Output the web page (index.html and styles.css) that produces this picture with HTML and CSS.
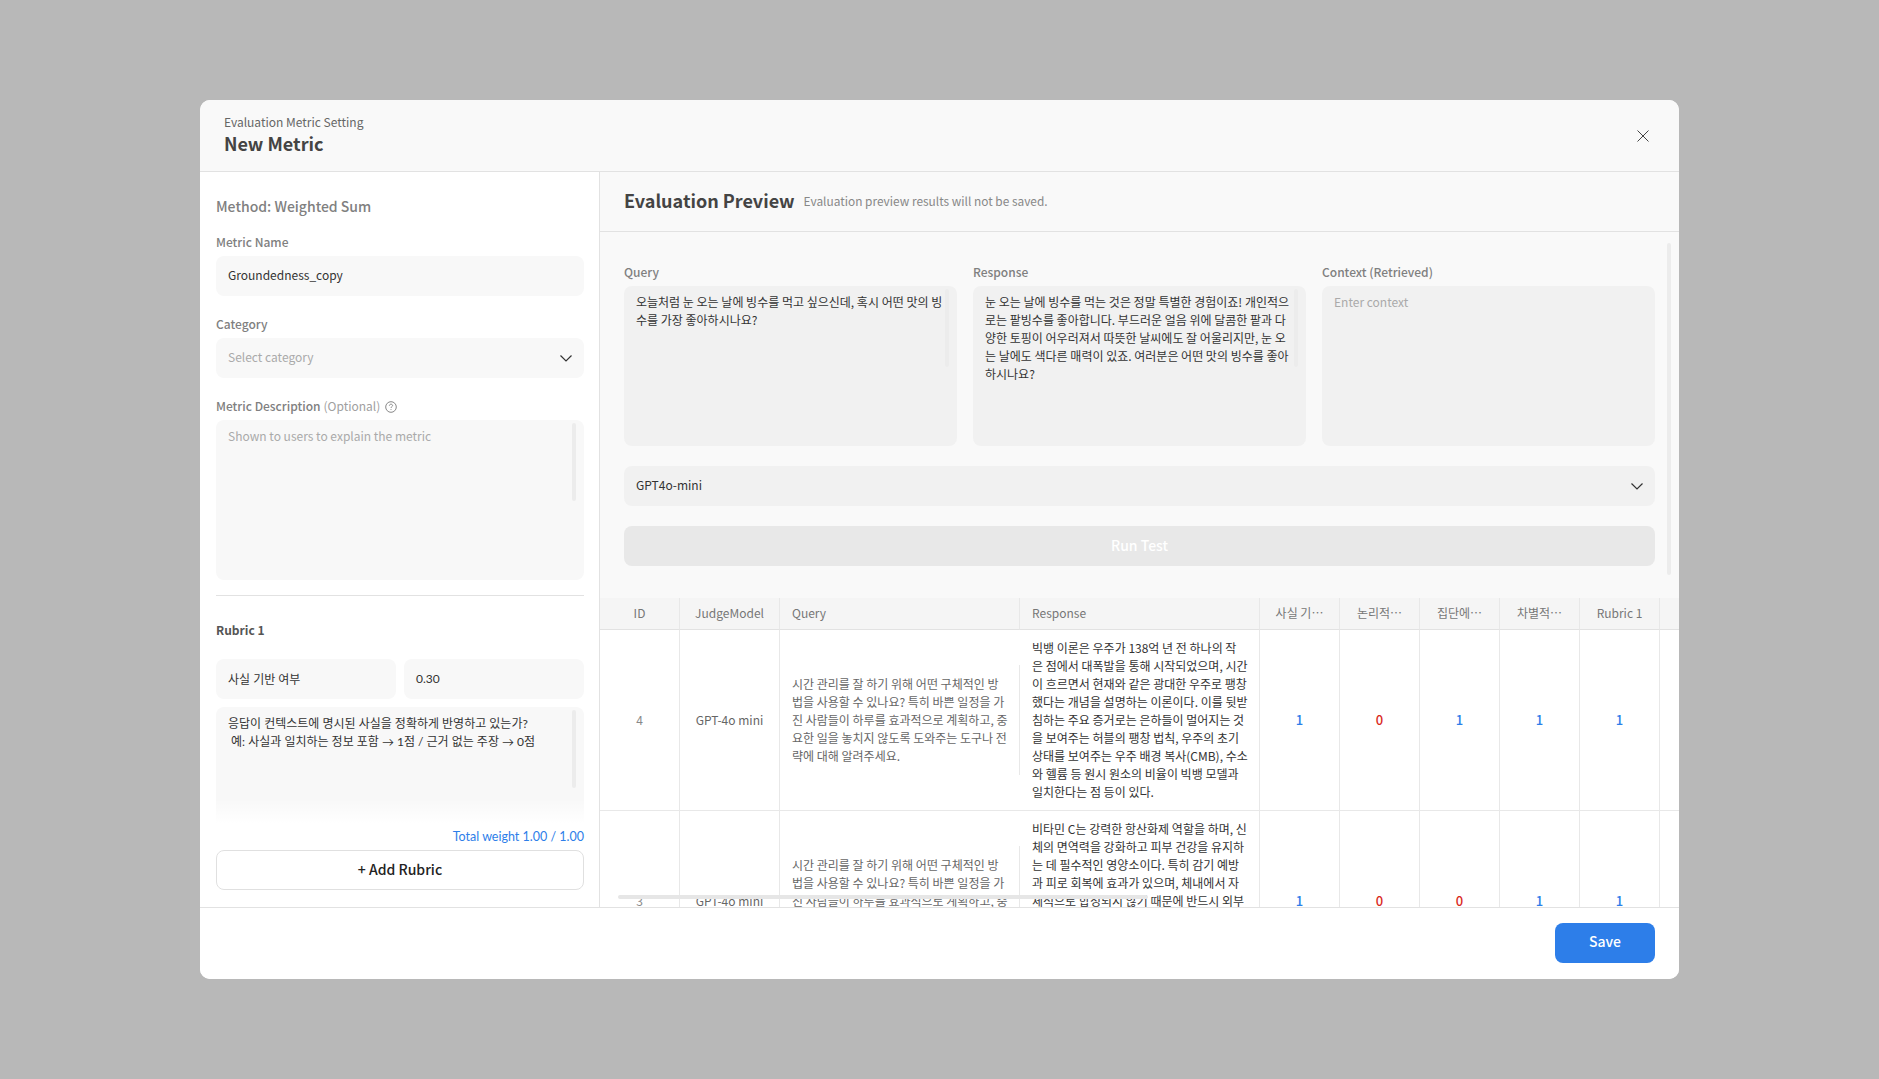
FILE: index.html
```html
<!DOCTYPE html>
<html lang="en">
<head>
<meta charset="utf-8">
<title>New Metric</title>
<link rel="stylesheet" href="styles.css">
</head>
<body>
<div class="overlay">
  <div class="modal">
    <header class="modal-head">
      <div>
        <div class="crumb">Evaluation Metric Setting</div>
        <h1 class="title">New Metric</h1>
      </div>
      <svg class="close" width="12" height="12" viewBox="0 0 12 12"><path d="M0.5 0.5L11.5 11.5M11.5 0.5L0.5 11.5"/></svg>
    </header>
    <div class="main">
      <aside class="left">
        <div class="left-scroll">
          <div class="method">Method: Weighted Sum</div>
          <div class="field">
            <div class="label">Metric Name</div>
            <div class="box">Groundedness_copy</div>
          </div>
          <div class="field">
            <div class="label">Category</div>
            <div class="box select placeholder">Select category
              <svg class="chev" width="12" height="7" viewBox="0 0 12 7"><path d="M0.5 0.5L6 6L11.5 0.5"/></svg>
            </div>
          </div>
          <div class="field field-last">
            <div class="label"><b>Metric Description</b> <span class="opt">(Optional)</span>
              <svg class="help" width="12" height="12" viewBox="0 0 12 12"><circle cx="6" cy="6" r="5.3"/><path d="M4.4 4.7C4.4 3.8 5.1 3.2 6 3.2C6.9 3.2 7.6 3.8 7.6 4.6C7.6 5.6 6 5.7 6 7"/><path d="M6 8.2V9"/></svg>
            </div>
            <div class="area placeholder">Shown to users to explain the metric<span class="bar"></span></div>
          </div>
          <hr class="divider">
          <div class="rubric-title">Rubric 1</div>
          <div class="rubric-row">
            <div class="box rubric">사실 기반 여부</div>
            <div class="box rubric">0.30</div>
          </div>
          <div class="area rubric rubric-area">응답이 컨텍스트에 명시된 사실을 정확하게 반영하고 있는가?<br>&nbsp;예: 사실과 일치하는 정보 포함 → 1점 / 근거 없는 주장 → 0점<span class="bar"></span></div>
        </div>
        <div class="left-foot">
          <div class="total">Total weight <span>1.00 / 1.00</span></div>
          <button class="add">+ Add Rubric</button>
        </div>
      </aside>
      <section class="right">
        <div class="right-head">
          <h2 class="preview-title">Evaluation Preview</h2>
          <span class="preview-sub">Evaluation preview results will not be saved.</span>
        </div>
        <div class="preview">
          <div class="triple">
            <div class="col">
              <div class="label">Query</div>
              <div class="area dark">오늘처럼 눈 오는 날에 빙수를 먹고 싶으신데, 혹시 어떤 맛의 빙수를 가장 좋아하시나요?<span class="bar"></span></div>
            </div>
            <div class="col">
              <div class="label">Response</div>
              <div class="area dark">눈 오는 날에 빙수를 먹는 것은 정말 특별한 경험이죠! 개인적으로는 팥빙수를 좋아합니다. 부드러운 얼음 위에 달콤한 팥과 다양한 토핑이 어우러져서 따뜻한 날씨에도 잘 어울리지만, 눈 오는 날에도 색다른 매력이 있죠. 여러분은 어떤 맛의 빙수를 좋아하시나요?<span class="bar"></span></div>
            </div>
            <div class="col">
              <div class="label">Context (Retrieved)</div>
              <div class="area dark placeholder">Enter context</div>
            </div>
          </div>
          <div class="box select dark">GPT4o-mini
            <svg class="chev" width="12" height="7" viewBox="0 0 12 7"><path d="M0.5 0.5L6 6L11.5 0.5"/></svg>
          </div>
          <button class="run">Run Test</button>
          <span class="vbar"></span>
        </div>
        <div class="table-wrap">
          <table class="grid">
            <colgroup>
              <col class="w80"><col class="w100"><col class="w240"><col class="w240">
              <col class="w80"><col class="w80"><col class="w80"><col class="w80"><col class="w80"><col class="w110">
            </colgroup>
            <thead>
              <tr>
                <th>ID</th><th>JudgeModel</th><th class="left-text">Query</th><th class="left-text">Response</th>
                <th>사실 기…</th><th>논리적…</th><th>집단에…</th><th>차별적…</th><th>Rubric 1</th><th>Final Score</th>
              </tr>
            </thead>
            <tbody>
              <tr>
                <td class="id">4</td>
                <td class="model">GPT-4o mini</td>
                <td class="q"><div class="q-inner">시간 관리를 잘 하기 위해 어떤 구체적인 방법을 사용할 수 있나요? 특히 바쁜 일정을 가진 사람들이 하루를 효과적으로 계획하고, 중요한 일을 놓치지 않도록 도와주는 도구나 전략에 대해 알려주세요.</div></td>
                <td class="r r-lines">빅뱅 이론은 우주가 138억 년 전 하나의 작<br>은 점에서 대폭발을 통해 시작되었으며, 시간<br>이 흐르면서 현재와 같은 광대한 우주로 팽창<br>했다는 개념을 설명하는 이론이다. 이를 뒷받<br>침하는 주요 증거로는 은하들이 멀어지는 것<br>을 보여주는 허블의 팽창 법칙, 우주의 초기<br>상태를 보여주는 우주 배경 복사(CMB), 수소<br>와 헬륨 등 원시 원소의 비율이 빅뱅 모델과<br>일치한다는 점 등이 있다.</td>
                <td class="one">1</td><td class="zero">0</td><td class="one">1</td><td class="one">1</td><td class="one">1</td><td></td>
              </tr>
              <tr>
                <td class="id">3</td>
                <td class="model">GPT-4o mini</td>
                <td class="q"><div class="q-inner">시간 관리를 잘 하기 위해 어떤 구체적인 방법을 사용할 수 있나요? 특히 바쁜 일정을 가진 사람들이 하루를 효과적으로 계획하고, 중요한 일을 놓치지 않도록 도와주는 도구나 전략에 대해 알려주세요.</div></td>
                <td class="r">비타민 C는 강력한 항산화제 역할을 하며, 신체의 면역력을 강화하고 피부 건강을 유지하는 데 필수적인 영양소이다. 특히 감기 예방과 피로 회복에 효과가 있으며, 체내에서 자체적으로 합성되지 않기 때문에 반드시 외부 음식이나 보충제로 섭취해야 한다. 대표적인 식품으로는 감귤류, 딸기, 브로콜리, 키위, 파프리카 등이 있으며 매일 꾸준히 적정량을 섭취하는 것이 건강 유지에 권장된다.</td>
                <td class="one">1</td><td class="zero">0</td><td class="zero">0</td><td class="one">1</td><td class="one">1</td><td></td>
              </tr>
            </tbody>
          </table>
          <span class="hbar"></span>
        </div>
      </section>
    </div>
    <footer class="modal-foot">
      <button class="save">Save</button>
    </footer>
  </div>
</div>
</body>
</html>
```
FILE: styles.css
```css
* { box-sizing: border-box; }
html, body { margin: 0; height: 100%; }
body {
  font-family: "Noto Sans CJK KR", "Noto Sans", sans-serif;
  font-size: 12px;
  color: #333;
  overflow: hidden;
  word-break: break-all;
}
.overlay {
  height: 1079px;
  background: #b8b8b8;
  padding: 100px 200px;
}
.modal {
  width: 1479px;
  height: 879px;
  background: #fff;
  border-radius: 10px;
  display: flex;
  flex-direction: column;
  overflow: hidden;
}
.modal-head {
  height: 72px;
  flex: none;
  background: #f9f9f9;
  border-bottom: 1px solid #e2e2e2;
  padding: 13px 30px 0 24px;
  display: flex;
  justify-content: space-between;
  align-items: flex-start;
}
.crumb { font-size: 12px; line-height: 18px; color: #666; }
.title { margin: 0; font-size: 18px; line-height: 25px; font-weight: 700; color: #444; }
.close { margin-top: 17px; }
.close path { stroke: #444; stroke-width: 1; fill: none; }
.main { flex: 1; display: flex; min-height: 0; }
.left {
  width: 400px;
  flex: none;
  border-right: 1px solid #e2e2e2;
  display: flex;
  flex-direction: column;
  background: #fff;
}
.left-scroll {
  flex: 1;
  min-height: 0;
  overflow: hidden;
  padding: 24px 15px 0 16px;
  position: relative;
}
.left-scroll::after {
  content: "";
  position: absolute;
  left: 0;
  right: 0;
  bottom: 0;
  height: 24px;
  background: linear-gradient(rgba(255,255,255,0), #fff);
}
.method { font-size: 14px; line-height: 20px; font-weight: 500; color: #808080; margin-bottom: 18px; }
.field { margin-bottom: 20px; }
.field-last { margin-bottom: 15px; }
.label { font-size: 12px; line-height: 18px; font-weight: 500; color: #808080; margin: -1px 0 5px; display: flex; align-items: center; gap: 3px; }
.label b { font-weight: 500; }
.opt { font-weight: 400; color: #a0a0a0; }
.help { margin-left: 2px; margin-top: 2px; }
.help circle, .help path { fill: none; stroke: #888; stroke-width: 1; }
.box {
  height: 40px;
  border-radius: 8px;
  background: #f8f8f8;
  padding: 0 12px 3px;
  display: flex;
  align-items: center;
  font-size: 12px;
  color: #333;
}
.select { justify-content: space-between; }
.chev { margin-top: 3px; }
.chev path { fill: none; stroke: #333; stroke-width: 1.2; }
.placeholder { color: #aaa; }
.area {
  position: relative;
  height: 160px;
  border-radius: 8px;
  background: #f8f8f8;
  padding: 7px 12px;
  font-size: 12px;
  line-height: 18px;
}
.area.placeholder { color: #aaa; }
.bar {
  position: absolute;
  top: 3px;
  right: 8px;
  width: 4px;
  height: 78px;
  background: #ececec;
  border-radius: 2px;
}
.divider { border: 0; border-top: 1px solid #e2e2e2; margin: 0 0 24px; }
.rubric-title { font-size: 12px; line-height: 20px; font-weight: 700; color: #555; margin-bottom: 19px; }
.rubric-row { display: flex; gap: 8px; margin-bottom: 8px; }
.rubric-row .box { flex: 1; padding-bottom: 2px; }
.rubric { font-family: "Lato", "Noto Sans CJK KR", sans-serif; font-size: 12px; }
.rubric-area { padding-top: 8px; }
.left-foot { flex: none; height: 84px; padding: 5px 15px 0 16px; background: #fff; }
.total { text-align: right; font-family: "Lato", "Noto Sans", sans-serif; font-size: 12.5px; line-height: 18px; color: #2d7ee9; margin-bottom: 4px; }
.add {
  width: 100%;
  height: 40px;
  padding: 0 0 3px;
  background: #fff;
  border: 1px solid #e0e0e0;
  border-radius: 8px;
  font: 500 14px "Noto Sans CJK KR", "Noto Sans", sans-serif;
  color: #222;
}
.right { flex: 1; min-width: 0; background: #f9f9f9; display: flex; flex-direction: column; }
.right-head {
  height: 60px;
  flex: none;
  border-bottom: 1px solid #e2e2e2;
  padding: 0 24px 3px;
  display: flex;
  align-items: center;
  gap: 9px;
}
.preview-title { margin: 0; font-size: 18px; font-weight: 700; color: #444; }
.preview-sub { font-size: 11.9px; color: #888; }
.preview {
  position: relative;
  flex: none;
  padding: 32px 24px 32px 24px;
  display: flex;
  flex-direction: column;
  gap: 20px;
}
.triple { display: flex; gap: 16px; }
.col { flex: 1; min-width: 0; }
.dark { background: #f1f1f1; }
.area.dark { color: #333; }
.area.dark.placeholder { color: #aaa; }
.run {
  height: 40px;
  padding: 0 0 3px;
  border: 0;
  border-radius: 8px;
  background: #e8e8e8;
  color: #fff;
  font: 500 14px "Noto Sans CJK KR", "Noto Sans", sans-serif;
}
.vbar {
  position: absolute;
  top: 11px;
  right: 8px;
  width: 4px;
  height: 332px;
  background: #ececec;
  border-radius: 2px;
}
.table-wrap { flex: 1; min-height: 0; overflow: hidden; position: relative; background: #fff; }
.grid { border-collapse: separate; border-spacing: 0; table-layout: fixed; width: 1170px; font-size: 12px; }
.w80 { width: 80px; }
.w100 { width: 100px; }
.w240 { width: 240px; }
.w110 { width: 110px; }
.grid th {
  height: 32px;
  background: #f5f5f5;
  border-right: 1px solid #e8e8e8;
  border-bottom: 1px solid #e2e2e2;
  font-weight: 400;
  color: #777;
  padding: 0 0 3px;
  white-space: nowrap;
}
.grid th.left-text { text-align: left; padding: 0 12px 3px; }
.grid td {
  background: #fff;
  border-right: 1px solid #e8e8e8;
  border-bottom: 1px solid #e8e8e8;
  padding: 9px 11px 9px 12px;
  line-height: 18px;
  text-align: center;
}
.id { color: #888; }
.grid td.model { color: #666; white-space: nowrap; padding: 0; }
.grid td.q { padding: 0; border-right: 0; color: #666; text-align: left; }
.q-inner { padding: 10px 11px 10px 12px; border-right: 1px solid #e8e8e8; }
.grid td.r { color: #333; text-align: left; }
.grid td.r-lines { white-space: nowrap; padding-right: 0; }
.grid td.one { color: #2d7ee9; font-size: 13px; font-weight: 500; padding: 0; }
.grid td.zero { color: #d9291c; font-size: 13px; font-weight: 500; padding: 0; }
.grid td.id { padding: 0; }
.hbar {
  position: absolute;
  left: 18px;
  bottom: 8px;
  width: 530px;
  height: 4px;
  background: #e6e6e6;
  border-radius: 2px;
}
.modal-foot {
  height: 72px;
  flex: none;
  background: #fff;
  border-top: 1px solid #e2e2e2;
  padding: 15px 24px 0 0;
  display: flex;
  justify-content: flex-end;
  align-items: flex-start;
}
.save {
  width: 100px;
  height: 40px;
  padding: 0 0 4px;
  border: 0;
  border-radius: 8px;
  background: #2d7ee9;
  color: #fff;
  font: 500 14px "Noto Sans CJK KR", "Noto Sans", sans-serif;
}
```
